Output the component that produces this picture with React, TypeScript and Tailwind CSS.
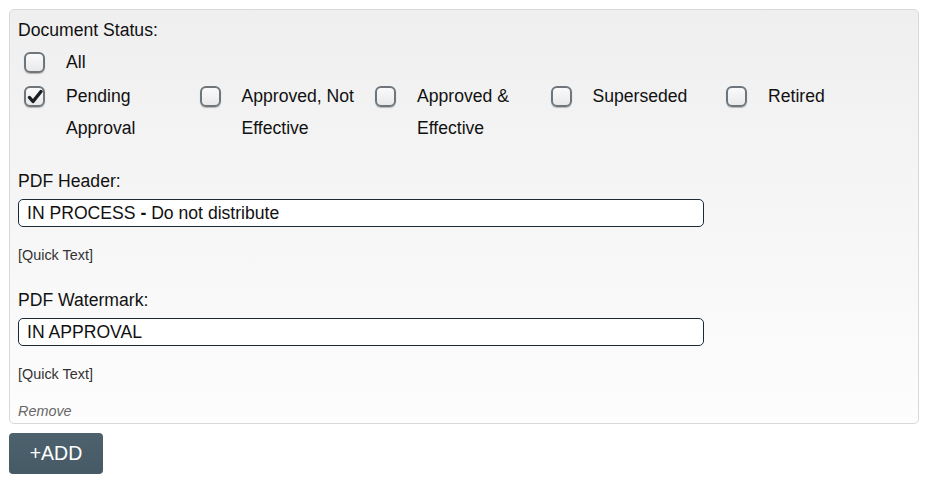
const statuses = [
  { label: "Pending Approval", checked: true },
  { label: "Approved, Not Effective", checked: false },
  { label: "Approved & Effective", checked: false },
  { label: "Superseded", checked: false },
  { label: "Retired", checked: false },
];

function Box({ checked }: { checked: boolean }) {
  return (
    <span className="mt-[6px] ml-[6px] flex h-[21px] w-[21px] shrink-0 items-center justify-center rounded-[6px] border-2 border-[#6e757b] bg-gradient-to-b from-[#fafafa] to-[#e9e9e9] shadow-[0_1px_1px_rgba(0,0,0,0.25)]">
      {checked ? (
        <svg viewBox="0 0 16 16" className="h-[16px] w-[16px]">
          <path
            d="M2.5 8.5 L6 12.5 L14 2.5"
            fill="none"
            stroke="#1a1f23"
            strokeWidth="3.4"
            strokeLinecap="round"
            strokeLinejoin="round"
          />
        </svg>
      ) : null}
    </span>
  );
}

function Option({ label, checked }: { label: string; checked: boolean }) {
  return (
    <div className="flex w-[175.5px] items-start">
      <Box checked={checked} />
      <span className="ml-[21px] w-[127px] leading-[32px]">{label}</span>
    </div>
  );
}

function TextField({ label, value }: { label: string; value: React.ReactNode }) {
  return (
    <div>
      <div className="leading-[24px]">{label}</div>
      <div className="mt-[6px] flex h-[28px] w-[686px] items-center rounded-[5px] border border-[#1c2a36] bg-white px-[8px]">
        {value}
      </div>
      <div className="mt-[18px] text-[14.4px] leading-[20px] text-[#333]">[Quick Text]</div>
    </div>
  );
}

export default function App() {
  return (
    <div className="bg-white pt-[9px] pl-[9px] text-[17.6px] text-[#111] [font-family:'Liberation_Sans',Arial,sans-serif]">
      <div className="w-[910px] rounded-[5px] border border-[#d9d9d9] bg-gradient-to-b from-[#efefef] to-[#fdfdfd] px-[8px] pt-[8px] pb-[2px]">
        <div className="leading-[24px]">Document Status:</div>
        <div className="mt-[4px] flex flex-col">
          <div className="h-[32px]">
            <Option label="All" checked={false} />
          </div>
          <div className="mt-[2px] flex">
            {statuses.map((s) => (
              <Option key={s.label} label={s.label} checked={s.checked} />
            ))}
          </div>
        </div>
        <div className="mt-[25px]">
          <TextField
            label="PDF Header:"
            value={
              <span>
                IN PROCESS <b>-</b> Do not distribute
              </span>
            }
          />
        </div>
        <div className="mt-[23px]">
          <TextField label="PDF Watermark:" value={<span>IN APPROVAL</span>} />
        </div>
        <div className="mt-[17px] text-[14.4px] leading-[20px] text-[#666] italic">Remove</div>
      </div>
      <button className="mt-[9px] flex h-[41px] w-[94px] items-center justify-center rounded-[4px] bg-gradient-to-b from-[#4e626e] to-[#465a66] text-[19.5px] text-white">
        +ADD
      </button>
    </div>
  );
}
